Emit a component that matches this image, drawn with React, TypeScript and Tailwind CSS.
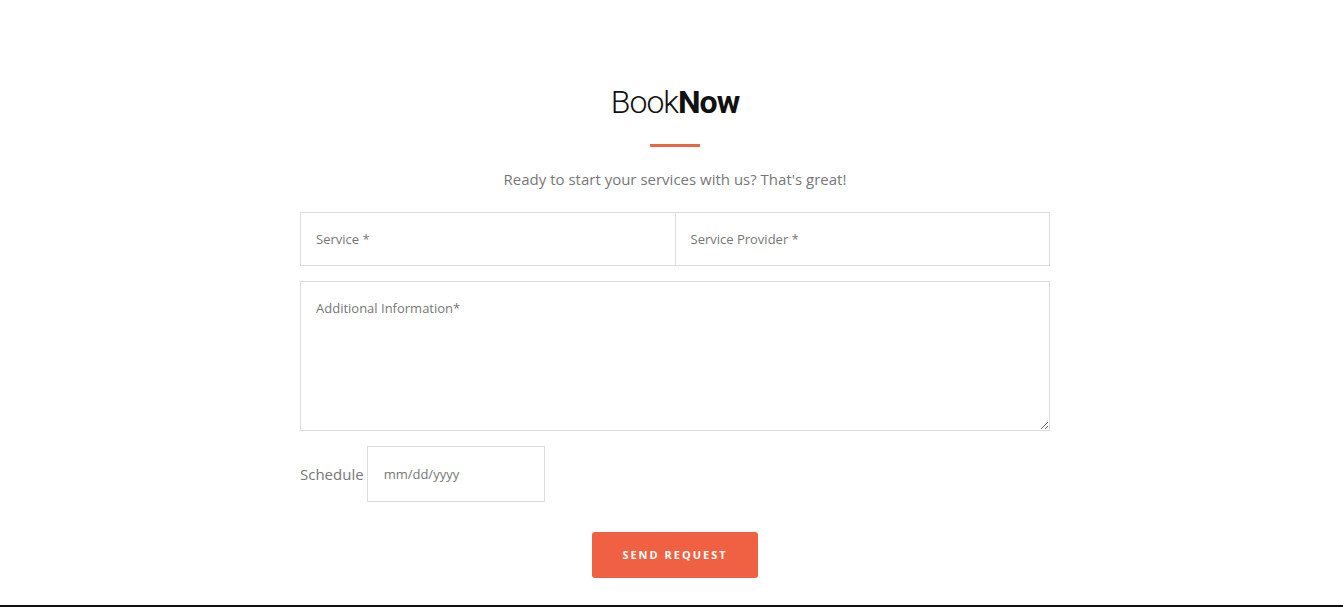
import React from "react";

export default function App() {
  return (
    <div className="w-[1343px] h-[607px] bg-white flex flex-col overflow-hidden" style={{ fontFamily: '"Open Sans", sans-serif' }}>
      <div className="flex-1 flex flex-col items-center pl-[7px]">
        <h2 className="mt-[83px] text-[32px] leading-[38px] text-[#111] tracking-[-1px]" style={{ fontFamily: 'Roboto, sans-serif' }}>
          <span className="font-light">Book</span><span className="font-bold">Now</span>
        </h2>
        <div className="mt-[23px] w-[50px] h-[3px] bg-[#ec6443]" />
        <p className="mt-[21px] text-[15px] leading-[22px] text-[#777]">Ready to start your services with us? That's great!</p>
        <form className="mt-[22px] w-[750px] flex flex-col">
          <div className="flex">
            <input className="w-[376px] h-[54px] border border-[#ddd] px-[15px] text-[13px] text-[#777] placeholder:text-[#777] outline-none" placeholder="Service *" />
            <input className="w-[375px] h-[54px] border border-[#ddd] border-l-0 px-[15px] text-[13px] text-[#777] placeholder:text-[#777] outline-none" placeholder="Service Provider *" />
          </div>
          <textarea className="mt-[15px] w-[750px] h-[150px] border border-[#ddd] px-[15px] pt-[16px] text-[13px] leading-[20px] text-[#777] placeholder:text-[#777] outline-none" placeholder="Additional Information*" />
          <div className="mt-[15px] flex items-center">
            <span className="text-[15px] text-[#777] mr-[3px]">Schedule</span>
            <input className="w-[178px] h-[56px] border border-[#ddd] px-[16px] text-[13px] text-[#777] placeholder:text-[#777] outline-none" placeholder="mm/dd/yyyy" />
          </div>
          <div className="mt-[30px] flex justify-center">
            <button type="button" className="w-[166px] h-[46px] rounded-[3px] bg-[#ef6142] text-white text-[11px] font-bold tracking-[2px] uppercase">Send Request</button>
          </div>
        </form>
      </div>
      <div className="h-[2px] bg-[#111]" />
    </div>
  );
}
